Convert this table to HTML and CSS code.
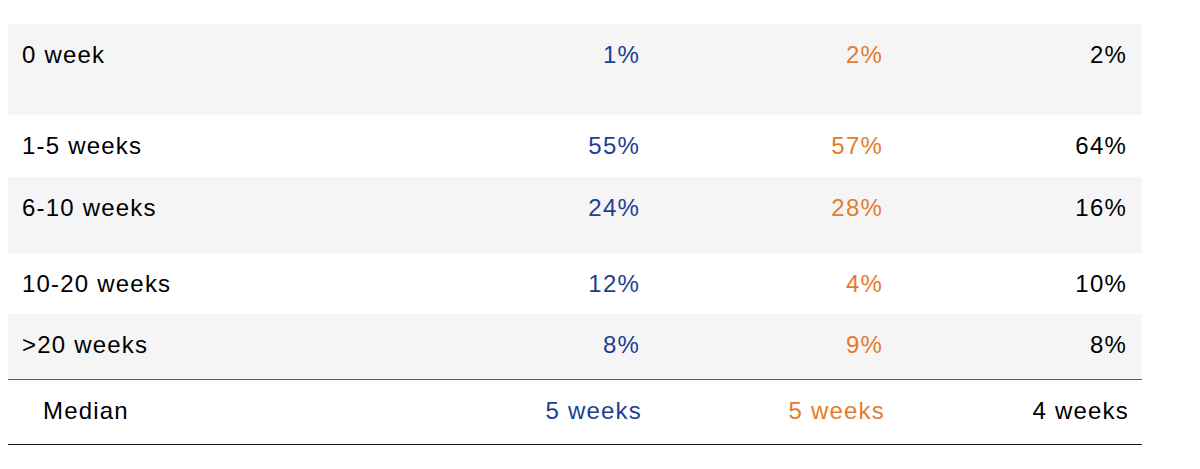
FILE: index.html
```html
<!DOCTYPE html>
<html>
<head>
<meta charset="utf-8">
<link rel="stylesheet" href="styles.css">
</head>
<body>
<div class="table">
  <div class="row shade r1"><div class="label">0 week</div><div class="v blue">1%</div><div class="v orange">2%</div><div class="v">2%</div></div>
  <div class="row r2"><div class="label">1-5 weeks</div><div class="v blue">55%</div><div class="v orange">57%</div><div class="v">64%</div></div>
  <div class="row shade r3"><div class="label">6-10 weeks</div><div class="v blue">24%</div><div class="v orange">28%</div><div class="v">16%</div></div>
  <div class="row r4"><div class="label">10-20 weeks</div><div class="v blue">12%</div><div class="v orange">4%</div><div class="v">10%</div></div>
  <div class="row shade r5"><div class="label">&gt;20 weeks</div><div class="v blue">8%</div><div class="v orange">9%</div><div class="v">8%</div></div>
  <div class="row median"><div class="label">Median</div><div class="v blue">5 weeks</div><div class="v orange">5 weeks</div><div class="v">4 weeks</div></div>
  <span class="handle"></span>
</div>
</body>
</html>
```
FILE: styles.css
```css
html, body {
  margin: 0;
  padding: 0;
  background: #ffffff;
}
body {
  padding: 24px 8px 0 8px;
  font-family: "Liberation Sans", Arial, sans-serif;
  font-size: 24px;
  letter-spacing: 1.2px;
  line-height: 25px;
  color: #000000;
}
.table {
  position: relative;
  width: 1134px;
}
.row {
  display: grid;
  grid-template-columns: 1fr 243px 243px 244px;
  padding: 18px 15px 0 14px;
  box-sizing: border-box;
}
.shade { background: #f5f5f5; }
.v { text-align: right; }
.blue { color: #1c3f94; }
.orange { color: #e57b2c; }
.r1 { height: 91px; }
.r2 { height: 62px; }
.r3 { height: 76px; }
.r4 { height: 61px; }
.r5 { height: 65px; }
.median {
  height: 66px;
  border-top: 1px solid #5a5a5a;
  border-bottom: 1px solid #1a1a1a;
  padding: 18px 13px 0 35px;
}
.handle {
  position: absolute;
  right: -7px;
  bottom: -7px;
  width: 5px;
  height: 5px;
  border: 1px solid #888888;
  background: #ffffff;
}
```
